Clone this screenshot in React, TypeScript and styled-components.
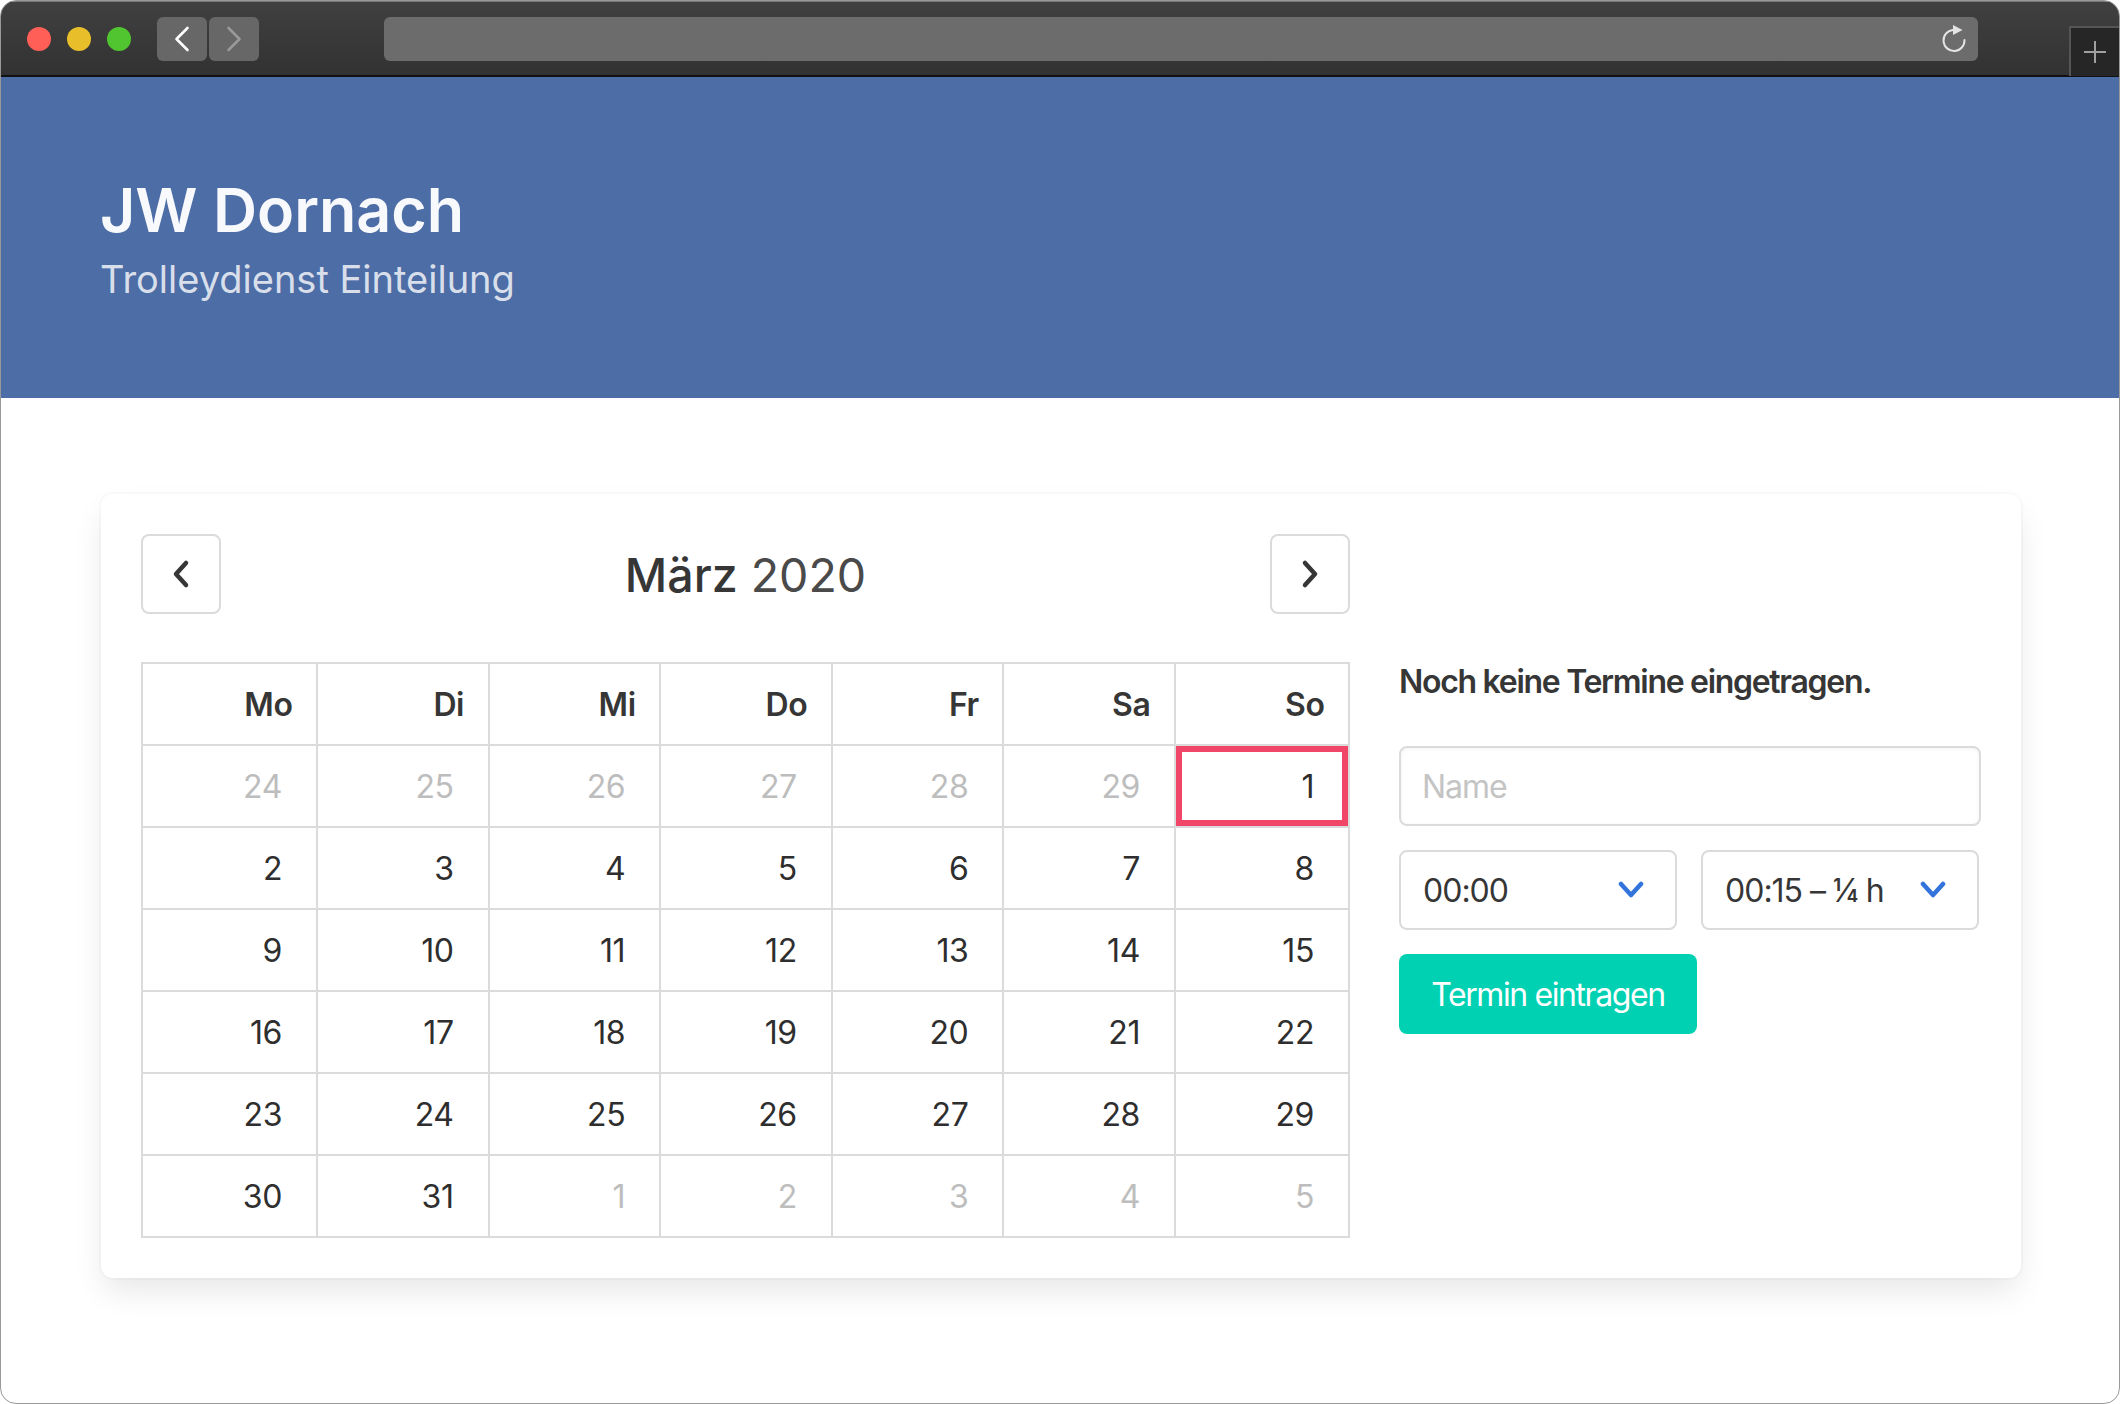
import React from 'react';
import { styled, createGlobalStyle } from 'styled-components';

const GlobalStyle = createGlobalStyle`
  html, body {
    margin: 0;
    padding: 0;
    background: #fff;
  }
  body {
    font-family: Inter, "Noto Sans", "Liberation Sans", sans-serif;
    color: #363636;
  }
  * {
    box-sizing: border-box;
  }
`;

const Frame = styled.div`
  width: 2120px;
  height: 1404px;
  border: 1.5px solid #999;
  border-radius: 16px;
  overflow: hidden;
  background: #fff;
  display: flex;
  flex-direction: column;
`;

const Chrome = styled.div`
  height: 76px;
  flex-shrink: 0;
  display: flex;
  align-items: flex-start;
  background: linear-gradient(#404040, #323232);
  border-top: 1px solid #777;
  border-bottom: 2px solid #111;
`;

const Lights = styled.div`
  display: flex;
  gap: 16px;
  margin: 25px 0 0 26px;
`;

const Light = styled.span<{ $color: string }>`
  width: 24px;
  height: 24px;
  border-radius: 50%;
  background: ${({ $color }) => $color};
`;

const NavButtons = styled.div`
  display: flex;
  gap: 2px;
  margin: 15px 0 0 26px;
`;

const NavButton = styled.div`
  width: 50px;
  height: 44px;
  border-radius: 6px;
  background: #676767;
  display: flex;
  align-items: center;
  justify-content: center;
`;

const UrlBar = styled.div`
  width: 1606px;
  height: 44px;
  margin: 15px 0 0 125px;
  padding-right: 12px;
  border-radius: 6px;
  background: #6c6c6c;
  display: flex;
  align-items: center;
  justify-content: flex-end;
`;

const NewTab = styled.div`
  width: 50px;
  height: 50px;
  margin: 24px 0 0 91px;
  background: #262626;
  border-top: 2px solid #555;
  border-left: 2px solid #555;
  display: flex;
  align-items: center;
  justify-content: center;
`;

const Hero = styled.header`
  height: 321px;
  flex-shrink: 0;
  padding: 97px 99px 0;
  background: #4d6da6;
`;

const Title = styled.h1`
  margin: 0;
  font-size: 61px;
  line-height: 72px;
  font-weight: 600;
  color: rgba(255, 255, 255, 0.96);
`;

const Subtitle = styled.h2`
  margin: 8px 0 0;
  font-size: 38px;
  line-height: 50px;
  font-weight: 400;
  color: rgba(255, 255, 255, 0.8);
`;

const Section = styled.main`
  padding: 96px 98px 0 100px;
`;

const Card = styled.section`
  height: 784px;
  padding: 40px;
  display: flex;
  gap: 49px;
  border-radius: 12px;
  background: #fff;
  box-shadow: 0 16px 32px -4px rgba(10, 10, 10, 0.1), 0 0 0 2px rgba(10, 10, 10, 0.02);
`;

const CalendarColumn = styled.div`
  width: 1209px;
  flex-shrink: 0;
`;

const CalendarNav = styled.div`
  height: 80px;
  margin-bottom: 48px;
  display: flex;
  align-items: center;
  justify-content: space-between;
`;

const ArrowButton = styled.button`
  width: 80px;
  height: 80px;
  padding: 0;
  border: 2px solid #dbdbdb;
  border-radius: 8px;
  background: #fff;
  color: #363636;
  display: flex;
  align-items: center;
  justify-content: center;
`;

const Month = styled.div`
  padding-top: 2px;
  font-size: 46.5px;
  line-height: 80px;
  color: #4a4a4a;

  strong {
    font-weight: 500;
    color: #363636;
  }
`;

const Table = styled.table`
  width: 100%;
  table-layout: fixed;
  border-collapse: collapse;
  font-size: 32px;
  line-height: 48px;
`;

const HeadCell = styled.th`
  height: 82px;
  padding: 17px 23.5px 15px 16px;
  border: 2px solid #dbdbdb;
  text-align: right;
  font-weight: 600;
  letter-spacing: -0.4px;
  color: #363636;

  &:first-child {
    width: 175px;
  }

  &:last-child {
    width: 174px;
  }
`;

const DayCell = styled.td<{ $muted?: boolean; $selected?: boolean }>`
  height: 82px;
  padding: 17px 34px 15px 16px;
  border: 2px solid #dbdbdb;
  text-align: right;
  letter-spacing: -0.4px;
  color: ${({ $muted }) => ($muted ? '#bdbdbd' : '#2e2e2e')};
  box-shadow: ${({ $selected }) => ($selected ? 'inset 0 0 0 6px #f14668' : 'none')};
`;

const FormColumn = styled.div`
  flex: 1;
  min-width: 0;
  padding-top: 130px;
`;

const Notice = styled.p`
  margin: 0 0 46px;
  font-size: 32px;
  line-height: 36px;
  font-weight: 600;
  letter-spacing: -1.3px;
  color: #363636;
`;

const NameInput = styled.input`
  display: block;
  width: 100%;
  height: 80px;
  padding: 0 21px;
  border: 2px solid #dbdbdb;
  border-radius: 8px;
  box-shadow: inset 0 1px 4px rgba(10, 10, 10, 0.05);
  font-family: inherit;
  font-size: 32px;
  letter-spacing: -1px;
  color: #363636;
  outline: none;

  &::placeholder {
    color: #c4c4c4;
    opacity: 1;
  }
`;

const SelectRow = styled.div`
  display: flex;
  gap: 24px;
  margin-top: 24px;
  padding-right: 2px;
`;

const SelectWrap = styled.div`
  position: relative;
  flex: 1;
`;

const Select = styled.select`
  display: block;
  width: 100%;
  height: 80px;
  padding: 0 22px;
  appearance: none;
  border: 2px solid #dbdbdb;
  border-radius: 8px;
  background: #fff;
  font-family: inherit;
  font-size: 32px;
  letter-spacing: -1px;
  color: #363636;
  outline: none;
`;

const SelectArrow = styled.svg`
  position: absolute;
  top: 31px;
  right: 33px;
  width: 26px;
  height: 18px;
  pointer-events: none;
`;

const SubmitButton = styled.button`
  display: block;
  width: 298px;
  height: 80px;
  margin-top: 24px;
  padding: 0;
  border: none;
  border-radius: 8px;
  background: #00d1b2;
  color: #fff;
  font-family: inherit;
  font-size: 32px;
  letter-spacing: -1.4px;
`;

const Arrow = () => (
  <SelectArrow viewBox="0 0 26 18" fill="none">
    <path d="M3 3l10 11L23 3" stroke="#3273dc" strokeWidth="4.5" strokeLinecap="round" strokeLinejoin="round" />
  </SelectArrow>
);

type Day = { label: number; muted?: boolean; selected?: boolean };

const weekDays = ['Mo', 'Di', 'Mi', 'Do', 'Fr', 'Sa', 'So'];

const buildWeeks = (): Day[][] => {
  const days: Day[] = [];
  for (let d = 24; d <= 29; d++) days.push({ label: d, muted: true });
  for (let d = 1; d <= 31; d++) days.push({ label: d, selected: d === 1 });
  for (let d = 1; d <= 5; d++) days.push({ label: d, muted: true });
  const weeks: Day[][] = [];
  for (let i = 0; i < days.length; i += 7) weeks.push(days.slice(i, i + 7));
  return weeks;
};

export default function App() {
  return (
    <Frame>
      <GlobalStyle />
      <Chrome>
        <Lights>
          <Light $color="#ff5f57" />
          <Light $color="#e8bf2a" />
          <Light $color="#50c530" />
        </Lights>
        <NavButtons>
          <NavButton>
            <svg width="16" height="26" viewBox="0 0 16 26" fill="none">
              <path d="M13.5 2L2.5 13l11 11" stroke="#fff" strokeWidth="2.6" strokeLinecap="round" strokeLinejoin="round" />
            </svg>
          </NavButton>
          <NavButton>
            <svg width="16" height="26" viewBox="0 0 16 26" fill="none">
              <path d="M2.5 2l11 11-11 11" stroke="#999" strokeWidth="2.6" strokeLinecap="round" strokeLinejoin="round" />
            </svg>
          </NavButton>
        </NavButtons>
        <UrlBar>
          <svg width="24" height="28" viewBox="0 0 24 28" fill="none">
            <path d="M11 5A10.5 10.5 0 1 0 22.5 15" stroke="#e4e4e4" strokeWidth="2" strokeLinecap="round" />
            <path d="M11 0l9.5 5L11 10z" fill="#e4e4e4" />
          </svg>
        </UrlBar>
        <NewTab>
          <svg width="24" height="24" viewBox="0 0 24 24">
            <path d="M12 1v22M1 12h22" stroke="#a0a0a0" strokeWidth="2" />
          </svg>
        </NewTab>
      </Chrome>
      <Hero>
        <Title>JW Dornach</Title>
        <Subtitle>Trolleydienst Einteilung</Subtitle>
      </Hero>
      <Section>
        <Card>
          <CalendarColumn>
            <CalendarNav>
              <ArrowButton aria-label="Vorheriger Monat">
                <svg width="20" height="30" viewBox="0 0 20 30" fill="none">
                  <path d="M15 4L5 15l10 11" stroke="#363636" strokeWidth="4.5" strokeLinecap="round" strokeLinejoin="round" />
                </svg>
              </ArrowButton>
              <Month>
                <strong>März</strong> 2020
              </Month>
              <ArrowButton aria-label="Nächster Monat">
                <svg width="20" height="30" viewBox="0 0 20 30" fill="none">
                  <path d="M5 4l10 11L5 26" stroke="#363636" strokeWidth="4.5" strokeLinecap="round" strokeLinejoin="round" />
                </svg>
              </ArrowButton>
            </CalendarNav>
            <Table>
              <thead>
                <tr>
                  {weekDays.map((day) => (
                    <HeadCell key={day}>{day}</HeadCell>
                  ))}
                </tr>
              </thead>
              <tbody>
                {buildWeeks().map((week, i) => (
                  <tr key={i}>
                    {week.map((day, j) => (
                      <DayCell key={j} $muted={day.muted} $selected={day.selected}>
                        {day.label}
                      </DayCell>
                    ))}
                  </tr>
                ))}
              </tbody>
            </Table>
          </CalendarColumn>
          <FormColumn>
            <Notice>Noch keine Termine eingetragen.</Notice>
            <NameInput placeholder="Name" />
            <SelectRow>
              <SelectWrap>
                <Select defaultValue="00:00">
                  <option>00:00</option>
                </Select>
                <Arrow />
              </SelectWrap>
              <SelectWrap>
                <Select defaultValue="00:15 – ¼ h">
                  <option>00:15 – ¼ h</option>
                </Select>
                <Arrow />
              </SelectWrap>
            </SelectRow>
            <SubmitButton>Termin eintragen</SubmitButton>
          </FormColumn>
        </Card>
      </Section>
    </Frame>
  );
}
